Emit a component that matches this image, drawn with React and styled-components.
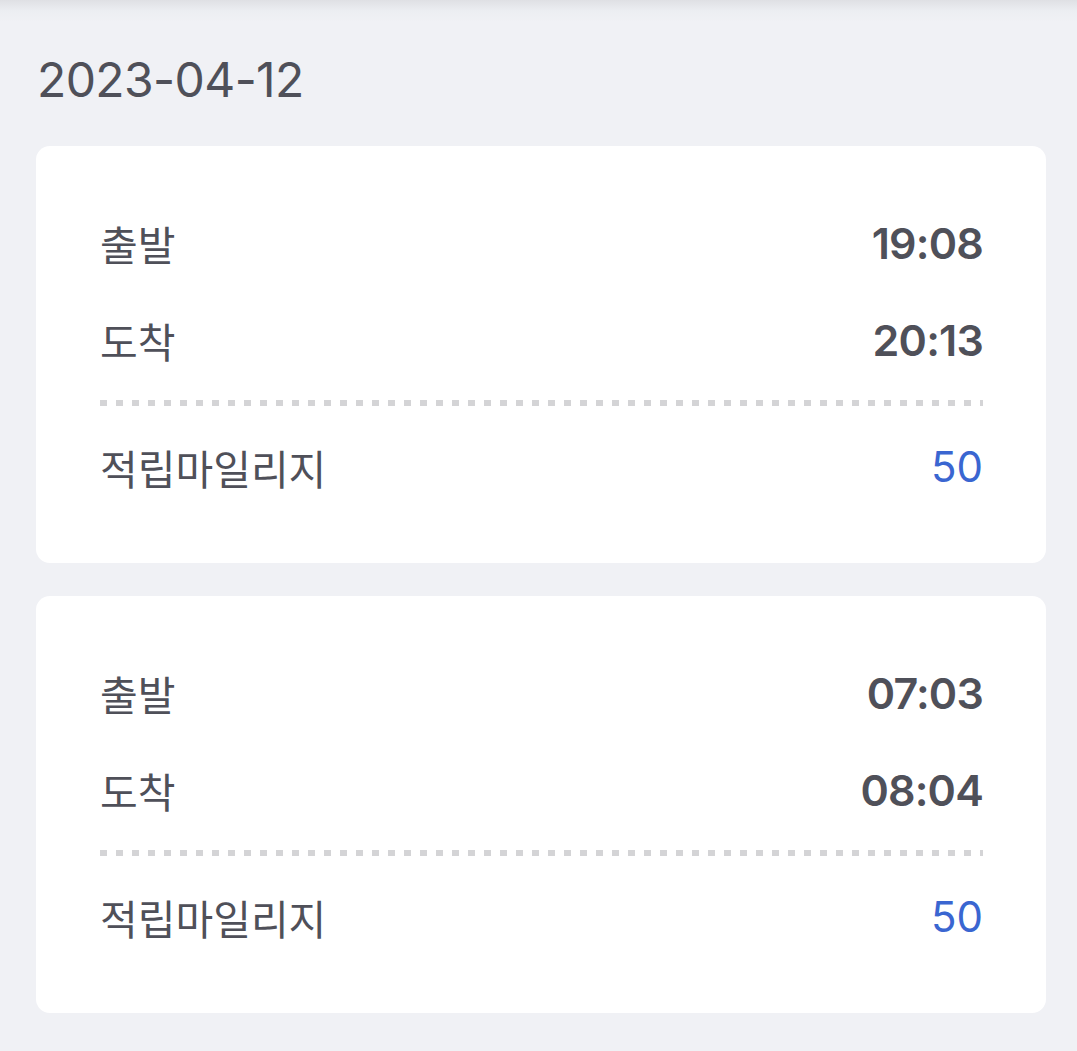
import React from 'react';
import styled, { createGlobalStyle } from 'styled-components';

const trips = [
  { depart: '19:08', arrive: '20:13', mileage: 50 },
  { depart: '07:03', arrive: '08:04', mileage: 50 },
];

const GlobalStyle = createGlobalStyle`
  html, body {
    margin: 0;
    padding: 0;
    background: #f0f1f5;
  }
  body {
    font-family: Inter, "Noto Sans CJK KR", sans-serif;
    color: #4f5059;
  }
`;

const Page = styled.div`
  min-height: 1051px;
  background: #f0f1f5;
`;

const TopShade = styled.div`
  height: 22px;
  background: linear-gradient(180deg, #dfe0e4 0%, #eceef2 50%, #f0f1f5 100%);
`;

const Section = styled.section`
  padding: 22px 31px 0 36px;
  display: flex;
  flex-direction: column;
  gap: 33px;
`;

const DateTitle = styled.h2`
  margin: 0 0 -3px 1px;
  font-family: Inter, sans-serif;
  font-size: 48px;
  font-weight: 400;
  line-height: 72px;
  letter-spacing: -0.6px;
  color: #4f5059;
`;

const Card = styled.div`
  background: #ffffff;
  border-radius: 14px;
  padding: 48px 63px 48px 64px;
  display: flex;
  flex-direction: column;
`;

const Row = styled.div`
  height: 97px;
  display: flex;
  align-items: center;
  justify-content: space-between;
`;

const Label = styled.span`
  font-family: "Noto Sans CJK KR", sans-serif;
  font-size: 41px;
  font-weight: 400;
  color: #4f5059;
`;

const Value = styled.span`
  font-family: Inter, sans-serif;
  font-size: ${(p) => (p.$accent ? '42px' : '43px')};
  font-weight: ${(p) => (p.$accent ? 400 : 600)};
  letter-spacing: ${(p) => (p.$accent ? '0' : '-0.8px')};
  color: ${(p) => (p.$accent ? '#3a66d1' : '#4f5059')};
`;

const Divider = styled.div`
  height: 6px;
  margin: 12px 0;
  background-image: linear-gradient(90deg, #d4d4d6 0 7px, transparent 7px 16px);
  background-size: 16px 6px;
  background-repeat: repeat-x;
`;

const TripCard = ({ depart, arrive, mileage }) => (
  <Card>
    <Row>
      <Label>출발</Label>
      <Value>{depart}</Value>
    </Row>
    <Row>
      <Label>도착</Label>
      <Value>{arrive}</Value>
    </Row>
    <Divider />
    <Row>
      <Label>적립마일리지</Label>
      <Value $accent>{mileage}</Value>
    </Row>
  </Card>
);

const App = () => (
  <Page>
    <GlobalStyle />
    <TopShade />
    <Section>
      <DateTitle>2023-04-12</DateTitle>
      {trips.map((t, i) => (
        <TripCard key={i} {...t} />
      ))}
    </Section>
  </Page>
);

export default App;
